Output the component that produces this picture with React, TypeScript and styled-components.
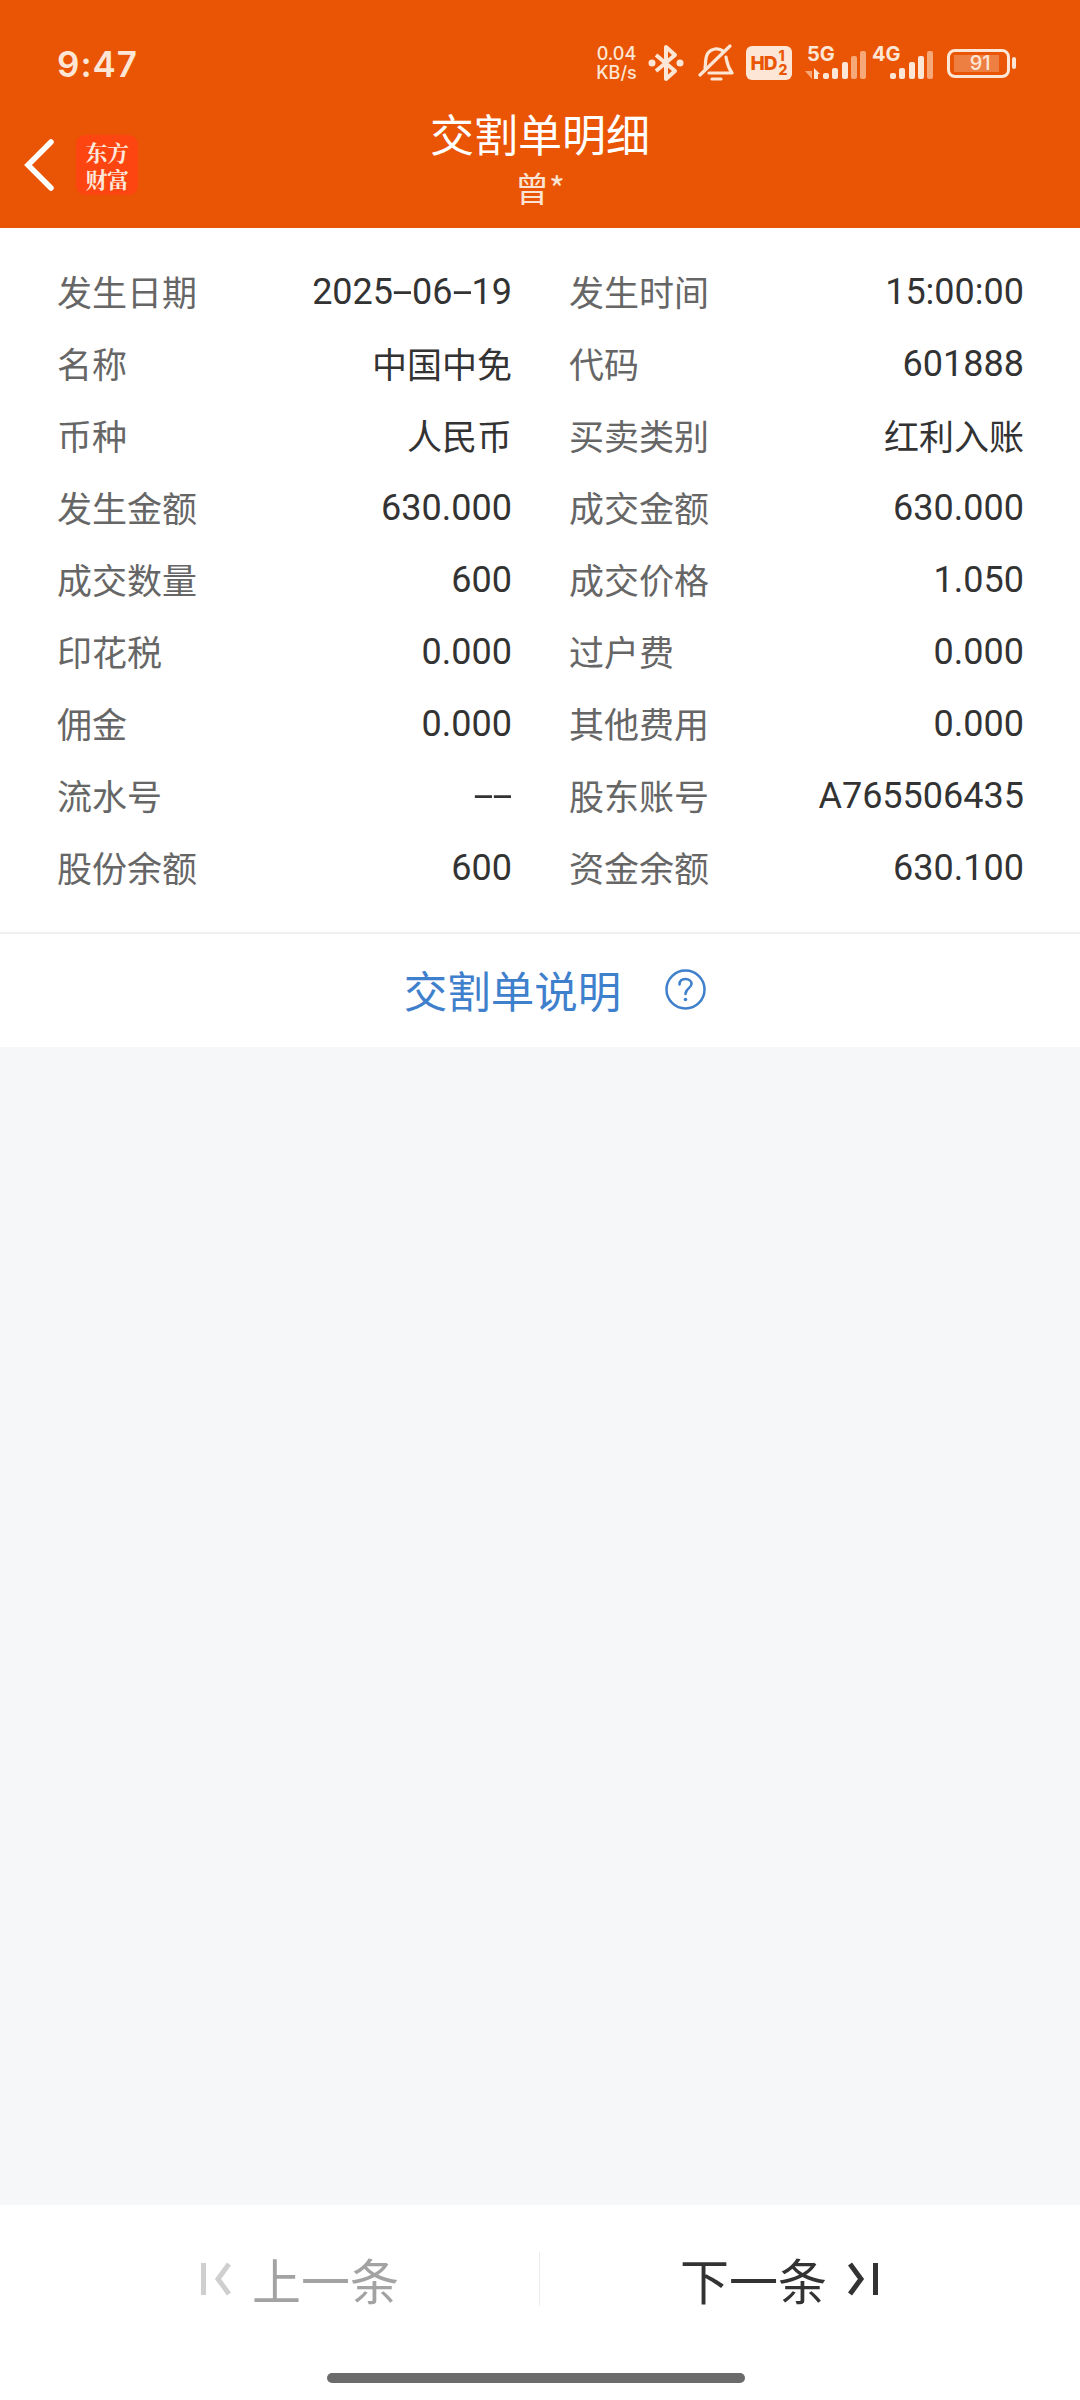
import React, { FC } from 'react';
import styled, { createGlobalStyle } from 'styled-components';

const GlobalStyle = createGlobalStyle`
  html, body {
    margin: 0;
    padding: 0;
    background: #fff;
  }
  * {
    box-sizing: border-box;
  }
`;

const Page = styled.div`
  width: 1080px;
  height: 2400px;
  display: flex;
  flex-direction: column;
  font-family: "Noto Sans CJK SC", "Noto Sans", sans-serif;
  background: #f6f7f9;
`;

const Header = styled.header`
  height: 228px;
  background: #e95504;
  color: #fff;
  display: flex;
  flex-direction: column;
`;

const StatusBar = styled.div`
  height: 112px;
  padding: 32px 0 0 57px;
  display: flex;
  align-items: flex-start;
  justify-content: space-between;
  color: #fde6d6;
`;

const Time = styled.div`
  font-family: Inter, sans-serif;
  font-size: 35px;
  font-weight: 600;
  line-height: 65px;
  height: 62px;
  letter-spacing: 1px;
`;

const StatusIcons = styled.div`
  display: flex;
  align-items: center;
  height: 62px;
  width: 487px;
`;

const Speed = styled.div`
  width: 47px;
  font-family: Inter, sans-serif;
  font-size: 18px;
  line-height: 19px;
  text-align: center;
  font-weight: 500;
  white-space: nowrap;
`;

const HdBadge = styled.div`
  width: 46px;
  height: 34px;
  margin-left: 12px;
  border-radius: 6px;
  background: #fde6d6;
  color: #e95504;
  display: flex;
  align-items: center;
  justify-content: center;
  font-family: Inter, sans-serif;
  font-weight: 800;
  font-size: 19px;
  letter-spacing: -1px;
`;

const HdFraction = styled.span`
  display: flex;
  flex-direction: column;
  font-size: 14px;
  line-height: 14px;
  margin-left: 2px;
  letter-spacing: 0;
`;

const Network = styled.div<{ $width: number; $gap: number }>`
  position: relative;
  width: ${(p) => p.$width}px;
  height: 36px;
  margin-left: ${(p) => p.$gap}px;
`;

const NetworkLabel = styled.span<{ $left: number }>`
  position: absolute;
  left: ${(p) => p.$left}px;
  top: 0;
  font-family: Inter, sans-serif;
  font-size: 20px;
  line-height: 18px;
  font-weight: 700;
`;

const SignalSvg = styled.svg`
  position: absolute;
  left: 0;
  bottom: 2px;
`;

const Battery = styled.div`
  width: 63px;
  height: 29px;
  margin-left: 13px;
  padding: 3px 4px;
  border: 3px solid #fde6d6;
  border-radius: 8px;
`;

const BatteryFill = styled.div`
  width: 91%;
  height: 100%;
  background: rgba(255, 255, 255, 0.25);
  color: #fde6d6;
  font-family: Inter, sans-serif;
  font-size: 20px;
  line-height: 17px;
  font-weight: 500;
  text-align: right;
  padding-right: 8px;
`;

const BatteryNub = styled.div`
  width: 4px;
  height: 12px;
  margin-left: 2px;
  border-radius: 2px;
  background: #fde6d6;
`;

const NavBar = styled.div`
  flex: 1;
  display: grid;
  grid-template-columns: 1fr auto 1fr;
  margin-top: -9px;
`;

const NavLeft = styled.div`
  display: flex;
  align-items: center;
  align-self: start;
  padding: 32px 0 0 23px;
`;

const Logo = styled.div`
  width: 62px;
  height: 60px;
  margin: 0 0 0 21px;
  padding: 3px 0 0;
  border-radius: 9px;
  background: #fc4510;
  color: #fde9dc;
  font-family: "Noto Serif CJK SC", "Noto Sans CJK SC", serif;
  font-weight: 700;
  font-size: 22px;
  line-height: 27px;
  text-align: center;
  letter-spacing: -0.5px;
`;

const TitleBlock = styled.div`
  text-align: center;
`;

const Title = styled.div`
  font-size: 44px;
  line-height: 60px;
`;

const SubTitle = styled.div`
  font-size: 34px;
  line-height: 40px;
  margin-top: 5px;
  color: #fbe3d3;
`;

const DetailCard = styled.section`
  background: #fff;
  padding: 28px 56px 28px 57px;
  border-bottom: 2px solid #f0f0f0;
  display: grid;
  grid-template-columns: 455px 455px;
  column-gap: 57px;
`;

const Item = styled.div`
  height: 72px;
  padding-bottom: 3px;
  display: flex;
  align-items: center;
  justify-content: space-between;
`;

const Label = styled.span`
  color: #666;
  font-size: 35px;
`;

const Value = styled.span<{ $latin: boolean }>`
  color: #333;
  font-size: ${(p) => (p.$latin ? '36px' : '35px')};
  font-family: ${(p) => (p.$latin ? 'Roboto, sans-serif' : 'inherit')};
  margin-top: ${(p) => (p.$latin ? '3px' : '0')};
`;

const Dash = styled.span`
  display: inline-block;
  width: 19px;
  text-align: center;
  transform: scaleX(2);
`;

const LinkRow = styled.div`
  height: 113px;
  background: #fff;
  display: flex;
  align-items: center;
  justify-content: center;
  gap: 44px;
  padding: 0 0 3px 30px;
  color: #3f80cc;
  font-size: 43.5px;
`;

const Filler = styled.div`
  flex: 1;
`;

const Footer = styled.footer`
  height: 195px;
  background: #fff;
  display: flex;
  flex-direction: column;
`;

const Pager = styled.div`
  height: 102px;
  padding-top: 47px;
  display: grid;
  grid-template-columns: 539px 1fr;
`;

const PageButton = styled.div<{ $disabled?: boolean; $next?: boolean }>`
  height: 54px;
  display: flex;
  align-items: center;
  gap: ${(p) => (p.$next ? '21px' : '21px')};
  font-size: 49px;
  line-height: 54px;
  color: ${(p) => (p.$disabled ? '#a3a3a3' : '#333')};
  padding-left: ${(p) => (p.$next ? '140px' : '201px')};
  border-left: ${(p) => (p.$next ? '1px solid #ececec' : 'none')};
`;

const HomeTrack = styled.div`
  flex: 1;
  display: flex;
  justify-content: center;
  padding: 66px 8px 0 0;
`;

const HomeBar = styled.div`
  width: 418px;
  height: 10px;
  border-radius: 5px;
  background: #6b6b6b;
`;

const rows: [string, string, string, string][] = [
  ['发生日期', '2025-06-19', '发生时间', '15:00:00'],
  ['名称', '中国中免', '代码', '601888'],
  ['币种', '人民币', '买卖类别', '红利入账'],
  ['发生金额', '630.000', '成交金额', '630.000'],
  ['成交数量', '600', '成交价格', '1.050'],
  ['印花税', '0.000', '过户费', '0.000'],
  ['佣金', '0.000', '其他费用', '0.000'],
  ['流水号', '--', '股东账号', 'A765506435'],
  ['股份余额', '600', '资金余额', '630.100'],
];

const FULL = '#fde6d6';
const DIM = '#f6a878';

const BluetoothIcon: FC = () => (
  <svg width="36" height="38" viewBox="0 0 36 38" style={{ marginLeft: 8 }} fill="none">
    <path d="M8 11 L27 27 L18 35 V3 L27 11 L8 27" stroke={FULL} strokeWidth="4" strokeLinejoin="round" />
    <circle cx="4" cy="19" r="3.5" fill={FULL} />
    <circle cx="32" cy="19" r="3.5" fill={FULL} />
  </svg>
);

const BellIcon: FC = () => (
  <svg width="36" height="38" viewBox="0 0 36 38" style={{ marginLeft: 14 }} fill="none" stroke={FULL} strokeWidth="3.2" strokeLinecap="round" strokeLinejoin="round">
    <path d="M7 24 C8 18 7 13 10 9 C13 5 20 3 25 7" />
    <path d="M28 13 C29 18 29 22 34 29 H11" />
    <path d="M2 31 L32 2" />
    <path d="M14 35 H23" />
  </svg>
);

const barX = [18, 27, 37, 46, 55];
const barTop = [22, 17, 11, 5, 0];

const Signal: FC<{ dimFrom: number; withArrows?: boolean }> = ({ dimFrom, withArrows }) => (
  <SignalSvg width="62" height="28" viewBox="0 0 62 28">
    {withArrows && <path d="M0 20 H7 V28 Z" fill={DIM} />}
    {withArrows && <path d="M9 17 L15 23 H13 V28 H9 Z" fill={FULL} />}
    {barX.map((x, i) => (
      <rect key={x} x={x} y={barTop[i]} width={6} height={28 - barTop[i]} rx={2} fill={i >= dimFrom ? DIM : FULL} />
    ))}
  </SignalSvg>
);

const BackIcon: FC = () => (
  <svg width="32" height="52" viewBox="0 0 32 52" fill="none">
    <path d="M28 3 L5 26 L28 49" stroke="#fff" strokeWidth="5.5" strokeLinecap="round" strokeLinejoin="miter" />
  </svg>
);

const HelpIcon: FC = () => (
  <svg width="41" height="41" viewBox="0 0 41 41" fill="none">
    <circle cx="20.5" cy="20.5" r="19" stroke="#3f80cc" strokeWidth="2.5" />
    <path d="M14.5 15.5 C14.5 11.5 17.5 10 20.5 10 C24 10 26.5 12 26.5 15 C26.5 19 20.5 19.5 20.5 25" stroke="#3f80cc" strokeWidth="2.5" strokeLinecap="round" />
    <circle cx="20.5" cy="30.5" r="1.8" fill="#3f80cc" />
  </svg>
);

const FirstIcon: FC = () => (
  <svg width="30" height="34" viewBox="0 0 30 34" fill="none" stroke="#cfcfcf" strokeWidth="5">
    <path d="M2.5 1 V33" />
    <path d="M28 2 L17 17 L28 32" />
  </svg>
);

const LastIcon: FC = () => (
  <svg width="30" height="34" viewBox="0 0 30 34" fill="none" stroke="#333" strokeWidth="5">
    <path d="M2 2 L13 17 L2 32" />
    <path d="M27.5 1 V33" />
  </svg>
);

const isLatin = (text: string) => /^[\x00-\x7f]+$/.test(text);

// the hyphens in the reference are drawn about twice as wide as Roboto's
const renderValue = (text: string) =>
  text.split(/(-)/).map((part, i) => (part === '-' ? <Dash key={i}>-</Dash> : part));

const Cell: FC<{ label: string; value: string }> = ({ label, value }) => (
  <Item>
    <Label>{label}</Label>
    <Value $latin={isLatin(value)}>{renderValue(value)}</Value>
  </Item>
);

const App: FC = () => {
  return (
    <Page>
      <GlobalStyle />
      <Header>
        <StatusBar>
          <Time>9:47</Time>
          <StatusIcons>
            <Speed>0.04<br />KB/s</Speed>
            <BluetoothIcon />
            <BellIcon />
            <HdBadge>
              HD
              <HdFraction><span>1</span><span>2</span></HdFraction>
            </HdBadge>
            <Network $width={62} $gap={13}>
              <NetworkLabel $left={2}>5G</NetworkLabel>
              <Signal dimFrom={3} withArrows />
            </Network>
            <Network $width={62} $gap={5}>
              <NetworkLabel $left={0}>4G</NetworkLabel>
              <Signal dimFrom={4} />
            </Network>
            <Battery>
              <BatteryFill>91</BatteryFill>
            </Battery>
            <BatteryNub />
          </StatusIcons>
        </StatusBar>
        <NavBar>
          <NavLeft>
            <BackIcon />
            <Logo>东方<br />财富</Logo>
          </NavLeft>
          <TitleBlock>
            <Title>交割单明细</Title>
            <SubTitle>曾*</SubTitle>
          </TitleBlock>
        </NavBar>
      </Header>
      <DetailCard>
        {rows.map(([l1, v1, l2, v2]) => (
          <React.Fragment key={l1}>
            <Cell label={l1} value={v1} />
            <Cell label={l2} value={v2} />
          </React.Fragment>
        ))}
      </DetailCard>
      <LinkRow>
        <span>交割单说明</span>
        <HelpIcon />
      </LinkRow>
      <Filler />
      <Footer>
        <Pager>
          <PageButton $disabled><FirstIcon /><span>上一条</span></PageButton>
          <PageButton $next><span>下一条</span><LastIcon /></PageButton>
        </Pager>
        <HomeTrack><HomeBar /></HomeTrack>
      </Footer>
    </Page>
  );
};

export default App;
